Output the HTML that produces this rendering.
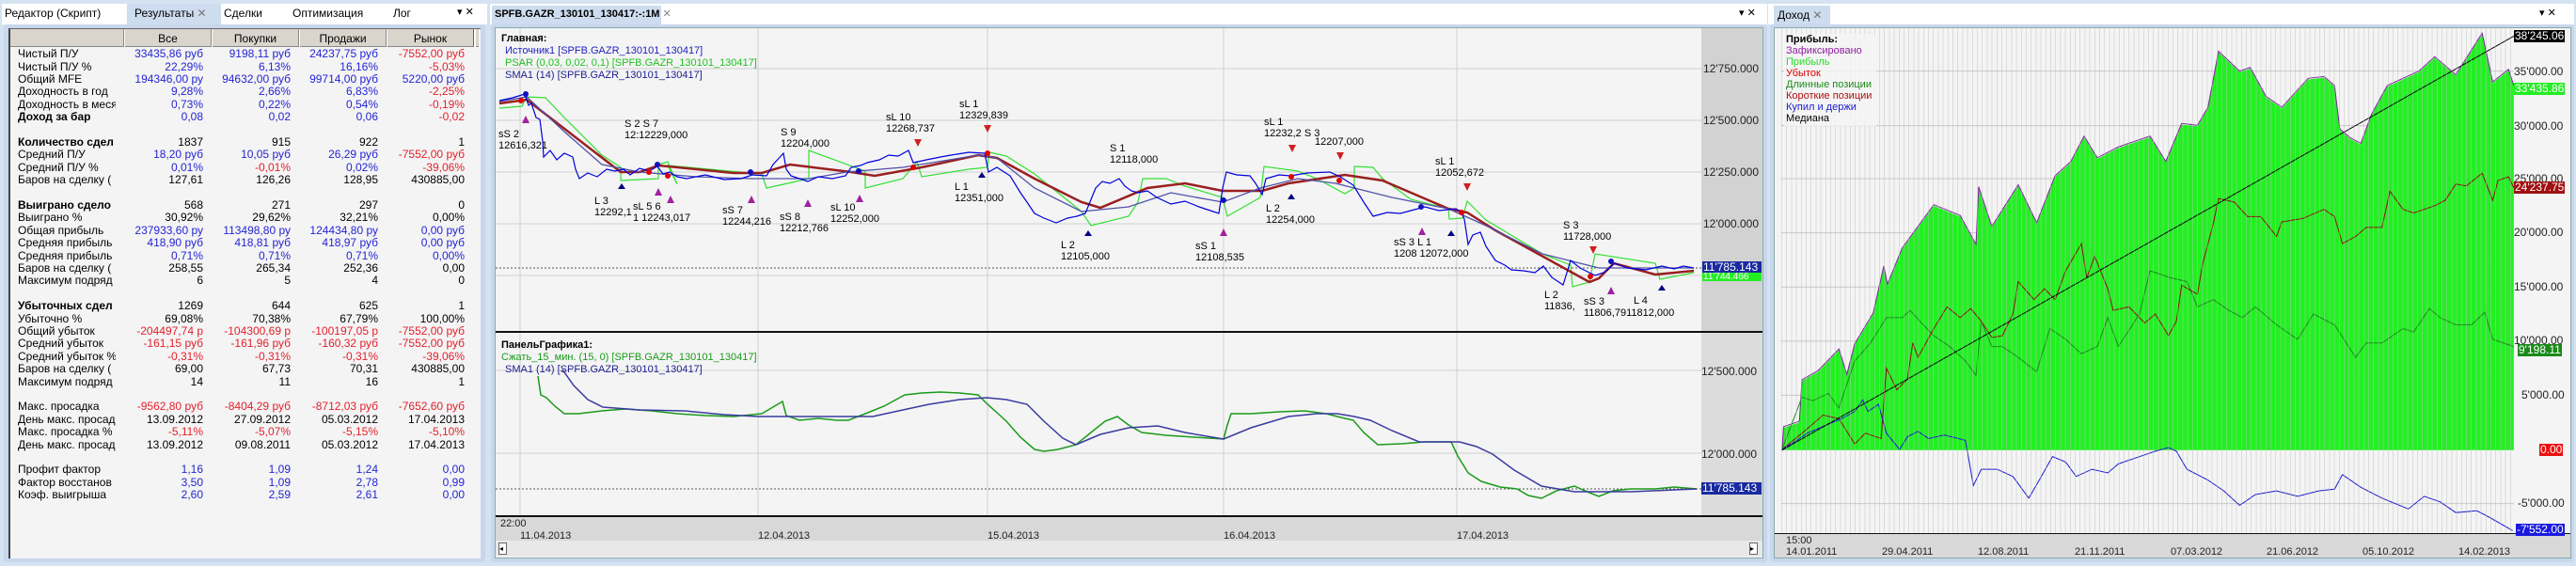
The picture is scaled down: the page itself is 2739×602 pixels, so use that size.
<!DOCTYPE html>
<html><head><meta charset="utf-8"><style>
*{margin:0;padding:0;box-sizing:border-box}
body{width:2739px;height:602px;background:#d5e2f2;position:relative;overflow:hidden;font-family:"Liberation Sans","DejaVu Sans",sans-serif;font-size:12px;color:#000}
.a{position:absolute;white-space:nowrap}
.tabbar{position:absolute;top:4px;height:22px;background:#fff}
.row{position:absolute;left:0;height:13.4px;line-height:13.4px;width:510px}
.row span{position:absolute;top:0;overflow:hidden;white-space:nowrap}
.l{left:19px;width:104px}
.c1{left:124px;width:92px;text-align:right}
.c2{left:216px;width:93px;text-align:right}
.c3{left:309px;width:93px;text-align:right}
.c4{left:402px;width:92px;text-align:right}
.b{color:#2424d4}.r{color:#e4202c}.bo{font-weight:bold}
.n{font-family:"Liberation Sans Narrow","Liberation Sans",sans-serif;font-size:11px}
.ax{font-family:"Liberation Sans Narrow","Liberation Sans",sans-serif;font-size:12px;color:#222}
.tag{position:absolute;font-family:"Liberation Sans Narrow","Liberation Sans",sans-serif;font-size:12px;height:13px;line-height:13px;padding:0 1px;color:#fff}
</style></head><body>

<!-- LEFT PANEL -->
<div class="tabbar" style="left:2px;width:516px"></div>
<div class="a" style="left:135px;top:4px;width:100px;height:22px;background:#cddcee"></div>
<div class="a" style="left:5px;top:7px">Редактор (Скрипт)</div>
<div class="a" style="left:143px;top:7px">Результаты <span style="color:#777">✕</span></div>
<div class="a" style="left:238px;top:7px">Сделки</div>
<div class="a" style="left:311px;top:7px">Оптимизация</div>
<div class="a" style="left:418px;top:7px">Лог</div>
<div class="a" style="left:486px;top:6px;font-size:11px">▾ ✕</div>
<div class="a" style="left:4px;top:26px;width:512px;height:572px;background:#c7d7ec;border-radius:3px"></div>
<div class="a" style="left:9px;top:30px;width:502px;height:564px;background:#f4f4f4;border-left:2px solid #444;border-top:1px solid #666"></div>
<div class="a" style="left:11px;top:31px;width:498px;height:19px;background:#d9d4cc;border-bottom:1px solid #888"></div>
<div class="a" style="left:131px;top:31px;width:2px;height:19px;background:#fff;border-left:1px solid #888"></div>
<div class="a" style="left:224px;top:31px;width:2px;height:19px;background:#fff;border-left:1px solid #888"></div>
<div class="a" style="left:317px;top:31px;width:2px;height:19px;background:#fff;border-left:1px solid #888"></div>
<div class="a" style="left:410px;top:31px;width:2px;height:19px;background:#fff;border-left:1px solid #888"></div>
<div class="a" style="left:503px;top:31px;width:3px;height:19px;background:#fff;border-left:1px solid #666"></div>
<div class="a" style="left:133px;top:34px;width:91px;text-align:center">Все</div>
<div class="a" style="left:226px;top:34px;width:91px;text-align:center">Покупки</div>
<div class="a" style="left:319px;top:34px;width:91px;text-align:center">Продажи</div>
<div class="a" style="left:412px;top:34px;width:91px;text-align:center">Рынок</div>

<div style="position:absolute;left:0;top:51.3px">
<div class="row" style="top:0"><span class="l">Чистый П/У</span><span class="c1 b">33435,86 руб</span><span class="c2 b">9198,11 руб</span><span class="c3 b">24237,75 руб</span><span class="c4 r">-7552,00 руб</span></div>
<div class="row" style="top:13.4px"><span class="l">Чистый П/У %</span><span class="c1 b">22,29%</span><span class="c2 b">6,13%</span><span class="c3 b">16,16%</span><span class="c4 r">-5,03%</span></div>
<div class="row" style="top:26.8px"><span class="l">Общий MFE</span><span class="c1 b">194346,00 ру</span><span class="c2 b">94632,00 руб</span><span class="c3 b">99714,00 руб</span><span class="c4 b">5220,00 руб</span></div>
<div class="row" style="top:40.2px"><span class="l">Доходность в год</span><span class="c1 b">9,28%</span><span class="c2 b">2,66%</span><span class="c3 b">6,83%</span><span class="c4 r">-2,25%</span></div>
<div class="row" style="top:53.6px"><span class="l">Доходность в меся</span><span class="c1 b">0,73%</span><span class="c2 b">0,22%</span><span class="c3 b">0,54%</span><span class="c4 r">-0,19%</span></div>
<div class="row" style="top:67px"><span class="l bo">Доход за бар</span><span class="c1 b">0,08</span><span class="c2 b">0,02</span><span class="c3 b">0,06</span><span class="c4 r">-0,02</span></div>
<div class="row" style="top:93.8px"><span class="l bo">Количество сдел</span><span class="c1">1837</span><span class="c2">915</span><span class="c3">922</span><span class="c4">1</span></div>
<div class="row" style="top:107.2px"><span class="l">Средний П/У</span><span class="c1 b">18,20 руб</span><span class="c2 b">10,05 руб</span><span class="c3 b">26,29 руб</span><span class="c4 r">-7552,00 руб</span></div>
<div class="row" style="top:120.6px"><span class="l">Средний П/У %</span><span class="c1 b">0,01%</span><span class="c2 r">-0,01%</span><span class="c3 b">0,02%</span><span class="c4 r">-39,06%</span></div>
<div class="row" style="top:134px"><span class="l">Баров на сделку (</span><span class="c1">127,61</span><span class="c2">126,26</span><span class="c3">128,95</span><span class="c4">430885,00</span></div>
<div class="row" style="top:160.8px"><span class="l bo">Выиграно сдело</span><span class="c1">568</span><span class="c2">271</span><span class="c3">297</span><span class="c4">0</span></div>
<div class="row" style="top:174.2px"><span class="l">Выиграно %</span><span class="c1">30,92%</span><span class="c2">29,62%</span><span class="c3">32,21%</span><span class="c4">0,00%</span></div>
<div class="row" style="top:187.6px"><span class="l">Общая прибыль</span><span class="c1 b">237933,60 ру</span><span class="c2 b">113498,80 ру</span><span class="c3 b">124434,80 ру</span><span class="c4 b">0,00 руб</span></div>
<div class="row" style="top:201px"><span class="l">Средняя прибыль</span><span class="c1 b">418,90 руб</span><span class="c2 b">418,81 руб</span><span class="c3 b">418,97 руб</span><span class="c4 b">0,00 руб</span></div>
<div class="row" style="top:214.4px"><span class="l">Средняя прибыль</span><span class="c1 b">0,71%</span><span class="c2 b">0,71%</span><span class="c3 b">0,71%</span><span class="c4 b">0,00%</span></div>
<div class="row" style="top:227.8px"><span class="l">Баров на сделку (</span><span class="c1">258,55</span><span class="c2">265,34</span><span class="c3">252,36</span><span class="c4">0,00</span></div>
<div class="row" style="top:241.2px"><span class="l">Максимум подряд</span><span class="c1">6</span><span class="c2">5</span><span class="c3">4</span><span class="c4">0</span></div>
<div class="row" style="top:268px"><span class="l bo">Убыточных сдел</span><span class="c1">1269</span><span class="c2">644</span><span class="c3">625</span><span class="c4">1</span></div>
<div class="row" style="top:281.4px"><span class="l">Убыточно %</span><span class="c1">69,08%</span><span class="c2">70,38%</span><span class="c3">67,79%</span><span class="c4">100,00%</span></div>
<div class="row" style="top:294.8px"><span class="l">Общий убыток</span><span class="c1 r">-204497,74 р</span><span class="c2 r">-104300,69 р</span><span class="c3 r">-100197,05 р</span><span class="c4 r">-7552,00 руб</span></div>
<div class="row" style="top:308.2px"><span class="l">Средний убыток</span><span class="c1 r">-161,15 руб</span><span class="c2 r">-161,96 руб</span><span class="c3 r">-160,32 руб</span><span class="c4 r">-7552,00 руб</span></div>
<div class="row" style="top:321.6px"><span class="l">Средний убыток %</span><span class="c1 r">-0,31%</span><span class="c2 r">-0,31%</span><span class="c3 r">-0,31%</span><span class="c4 r">-39,06%</span></div>
<div class="row" style="top:335px"><span class="l">Баров на сделку (</span><span class="c1">69,00</span><span class="c2">67,73</span><span class="c3">70,31</span><span class="c4">430885,00</span></div>
<div class="row" style="top:348.4px"><span class="l">Максимум подряд</span><span class="c1">14</span><span class="c2">11</span><span class="c3">16</span><span class="c4">1</span></div>
<div class="row" style="top:375.2px"><span class="l">Макс. просадка</span><span class="c1 r">-9562,80 руб</span><span class="c2 r">-8404,29 руб</span><span class="c3 r">-8712,03 руб</span><span class="c4 r">-7652,60 руб</span></div>
<div class="row" style="top:388.6px"><span class="l">День макс. просад</span><span class="c1">13.09.2012</span><span class="c2">27.09.2012</span><span class="c3">05.03.2012</span><span class="c4">17.04.2013</span></div>
<div class="row" style="top:402px"><span class="l">Макс. просадка %</span><span class="c1 r">-5,11%</span><span class="c2 r">-5,07%</span><span class="c3 r">-5,15%</span><span class="c4 r">-5,10%</span></div>
<div class="row" style="top:415.4px"><span class="l">День макс. просад</span><span class="c1">13.09.2012</span><span class="c2">09.08.2011</span><span class="c3">05.03.2012</span><span class="c4">17.04.2013</span></div>
<div class="row" style="top:442.2px"><span class="l">Профит фактор</span><span class="c1 b">1,16</span><span class="c2 b">1,09</span><span class="c3 b">1,24</span><span class="c4 b">0,00</span></div>
<div class="row" style="top:455.6px"><span class="l">Фактор восстанов</span><span class="c1 b">3,50</span><span class="c2 b">1,09</span><span class="c3 b">2,78</span><span class="c4 b">0,99</span></div>
<div class="row" style="top:469px"><span class="l">Коэф. выигрыша</span><span class="c1 b">2,60</span><span class="c2 b">2,59</span><span class="c3 b">2,61</span><span class="c4 b">0,00</span></div>
</div>

<!-- MIDDLE PANEL -->
<div class="tabbar" style="left:521px;width:1358px"></div>
<div class="a" style="left:523px;top:6px;width:180px;height:20px;background:#cddcee"></div>
<div class="a" style="left:526px;top:8px;font-weight:bold;font-size:11px">SPFB.GAZR_130101_130417:-:1M <span style="color:#888;font-weight:normal">✕</span></div>
<div class="a" style="left:1849px;top:7px;font-size:11px">▾ ✕</div>
<div class="a" style="left:522px;top:26px;width:1357px;height:572px;background:#c7d7ec;border-radius:3px"></div>
<div class="a" style="left:526px;top:29px;width:1349px;height:565px;background:#f4f4f4;border:1px solid #8aa"></div>
<div class="a" style="left:1809px;top:30px;width:65px;height:323px;background:#d2d2d2"></div>
<div class="a" style="left:1809px;top:354px;width:65px;height:194px;background:#dcdcdc"></div>
<div class="a" style="left:527px;top:548px;width:1347px;height:27px;background:#d8d8d8;border-top:2px solid #111"></div>
<div class="a" style="left:527px;top:575px;width:1347px;height:17px;background:#e8e8e8"></div>
<div class="a" style="left:530px;top:577px;width:9px;height:13px;background:#fff;border:1px solid #666;font-size:8px;line-height:11px">◂</div>
<div class="a" style="left:1860px;top:577px;width:9px;height:13px;background:#fff;border:1px solid #666;font-size:8px;line-height:11px">▸</div>

<svg class="a" style="left:0;top:0" width="2739" height="602">
 <g stroke="#d0d0d0" stroke-width="1">
  <line x1="527" y1="73" x2="1809" y2="73"/><line x1="527" y1="128" x2="1809" y2="128"/>
  <line x1="527" y1="183" x2="1809" y2="183"/><line x1="527" y1="238" x2="1809" y2="238"/>
  <line x1="527" y1="293" x2="1809" y2="293"/><line x1="527" y1="394" x2="1809" y2="394"/>
  <line x1="527" y1="482" x2="1809" y2="482"/>
  <line x1="553" y1="30" x2="553" y2="548"/><line x1="806" y1="30" x2="806" y2="548"/>
  <line x1="1050" y1="30" x2="1050" y2="548"/><line x1="1301" y1="30" x2="1301" y2="548"/>
  <line x1="1549" y1="30" x2="1549" y2="548"/>
 </g>
 <line x1="527" y1="285" x2="1809" y2="285" stroke="#555" stroke-dasharray="2,2"/>
 <line x1="527" y1="520" x2="1809" y2="520" stroke="#555" stroke-dasharray="2,2"/>
 <line x1="527" y1="353" x2="1874" y2="353" stroke="#111" stroke-width="2"/>
 <polyline fill="none" stroke="#33e033" stroke-width="1.2" points="531,115 555,113 560,103 580,104 600,125 640,165 660,178 660,192 700,190 700,175 710,172 720,196 710,176 810,185 815,200 860,190 860,160 920,182 920,200 960,190 975,172 980,188 1030,180 1050,178 1052,162 1070,166 1100,185 1150,225 1160,240 1200,230 1210,215 1215,190 1240,190 1260,198 1300,210 1305,230 1340,210 1344,177 1380,182 1400,190 1430,206 1440,200 1440,177 1460,178 1470,190 1500,212 1540,222 1541,233 1555,232 1560,214 1580,234 1640,270 1670,282 1672,305 1690,300 1696,270 1760,280 1765,297 1801,290"/>
 <polyline fill="none" stroke="#9a2020" stroke-width="2.5" points="531,110 560,106 660,183 680,183 700,176 780,184 810,184 840,175 905,183 930,187 980,178 1040,165 1060,168 1100,190 1150,215 1170,221 1220,200 1260,195 1300,203 1342,203 1370,195 1430,186 1470,192 1540,222 1560,226 1590,245 1690,300 1700,296 1716,280 1760,292 1801,288"/>
 <polyline fill="none" stroke="#5050a8" stroke-width="1.3" points="531,108 560,103 600,140 640,175 680,183 740,188 800,190 860,190 900,183 960,178 1040,165 1060,168 1100,200 1150,225 1200,220 1245,205 1300,215 1340,200 1380,190 1420,195 1480,210 1540,222 1580,240 1640,270 1700,285 1801,285"/>
 <polyline fill="none" stroke="#0000dd" stroke-width="1.2" points="531,107 545,104 558,100 562,112 565,110 570,125 574,127 577,150 578,167 585,160 592,170 600,163 609,167 612,180 616,190 625,184 635,188 645,180 654,182 663,180 670,186 680,179 690,182 699,177 705,185 712,183 720,188 730,190 750,186 770,191 788,190 800,186 815,187 822,175 833,163 836,180 841,187 850,190 859,193 870,188 885,190 899,187 905,178 915,176 922,173 935,170 945,165 955,166 966,160 971,173 985,170 1000,167 1011,165 1030,162 1047,163 1051,183 1060,178 1074,187 1085,205 1092,215 1100,227 1110,232 1123,237 1135,232 1145,230 1154,227 1165,200 1172,193 1180,195 1190,190 1196,198 1203,203 1210,205 1220,203 1230,210 1245,217 1260,214 1275,220 1290,225 1296,227 1300,200 1304,183 1315,186 1329,187 1335,195 1342,207 1346,190 1360,186 1372,187 1390,184 1414,183 1425,188 1439,197 1450,215 1460,230 1475,226 1489,227 1500,224 1515,220 1530,224 1548,222 1554,226 1557,233 1561,260 1566,250 1574,247 1580,262 1590,277 1600,282 1607,287 1620,288 1632,290 1641,283 1650,295 1662,303 1666,290 1670,277 1680,285 1696,293 1705,290 1717,280 1730,285 1750,287 1767,283 1780,286 1790,283 1801,285"/>
 <g fill="#e00000"><circle cx="554" cy="107" r="3"/><circle cx="690" cy="183" r="3"/><circle cx="710" cy="187" r="3"/><circle cx="971" cy="178" r="3"/><circle cx="1050" cy="163" r="3"/><circle cx="1373" cy="188" r="3"/><circle cx="1424" cy="192" r="3"/><circle cx="1554" cy="226" r="3"/><circle cx="1691" cy="294" r="3"/></g>
 <g fill="#1010c0"><circle cx="559" cy="100" r="3"/><circle cx="699" cy="175" r="3"/><circle cx="798" cy="183" r="3"/><circle cx="913" cy="182" r="3"/><circle cx="1301" cy="213" r="3"/><circle cx="1511" cy="220" r="3"/><circle cx="1713" cy="278" r="3"/></g>
 <g fill="#a020a0"><polygon points="559,123 555,131 563,131"/><polygon points="700,200 696,208 704,208"/><polygon points="713,208 709,216 717,216"/><polygon points="799,208 795,216 803,216"/><polygon points="859,212 855,220 863,220"/><polygon points="914,207 910,215 918,215"/><polygon points="1301,243 1297,251 1305,251"/><polygon points="1512,242 1508,250 1516,250"/><polygon points="1713,305 1709,313 1717,313"/></g>
 <g fill="#d02020"><polygon points="972,148 976,156 980,148"/><polygon points="1046,133 1050,141 1054,133"/><polygon points="1370,154 1374,162 1378,154"/><polygon points="1421,162 1425,170 1429,162"/><polygon points="1556,195 1560,203 1564,195"/><polygon points="1690,262 1694,270 1698,262"/></g>
 <g fill="#000080"><polygon points="661,195 657,201 665,201"/><polygon points="1044,183 1040,189 1048,189"/><polygon points="1157,245 1153,251 1161,251"/><polygon points="1373,206 1369,212 1377,212"/><polygon points="1543,245 1539,251 1547,251"/><polygon points="1767,303 1763,309 1771,309"/></g>
 <polyline fill="none" stroke="#1a9a1a" stroke-width="1.5" points="572,400 575,420 581,423 590,432 600,440 615,440 640,437 665,435 693,437 720,440 750,442 780,443 810,440 832,427 836,442 850,447 870,445 890,447 902,447 920,440 940,432 962,420 980,418 1000,417 1020,418 1040,420 1050,430 1058,437 1070,448 1085,465 1100,478 1110,480 1125,478 1144,473 1160,460 1175,448 1188,443 1200,452 1214,460 1240,463 1270,465 1301,467 1305,452 1309,440 1330,440 1360,438 1387,437 1410,440 1430,445 1439,447 1450,460 1465,473 1490,472 1515,470 1543,470 1550,485 1561,503 1575,512 1595,518 1613,520 1625,527 1639,530 1655,522 1674,517 1690,524 1700,528 1715,522 1734,520 1760,520 1780,518 1804,520"/>
 <polyline fill="none" stroke="#3a3aa0" stroke-width="1.5" points="598,393 610,410 625,425 641,433 680,436 728,437 770,441 806,443 850,443 884,443 928,443 960,436 988,430 1020,425 1049,423 1070,425 1092,430 1110,448 1130,466 1144,473 1170,462 1200,455 1231,453 1260,460 1301,467 1330,455 1370,443 1400,440 1422,440 1440,443 1457,447 1480,458 1509,470 1552,470 1570,475 1587,483 1610,500 1639,517 1674,523 1734,523 1804,520"/>
</svg>
<div class="a" style="left:533px;top:35px;font-weight:bold;font-size:11px">Главная:</div>
<div class="a n" style="left:537px;top:48px;color:#2020c0">Источник1 [SPFB.GAZR_130101_130417]</div>
<div class="a n" style="left:537px;top:61px;color:#20c020">PSAR (0,03, 0,02, 0,1) [SPFB.GAZR_130101_130417]</div>
<div class="a n" style="left:537px;top:74px;color:#202090">SMA1 (14) [SPFB.GAZR_130101_130417]</div>
<div class="a n" style="left:530px;top:137px">sS 2<br>12616,321</div>
<div class="a n" style="left:664px;top:126px">S 2 S 7<br>12:12229,000</div>
<div class="a n" style="left:632px;top:208px">L 3<br>12292,1</div>
<div class="a n" style="left:673px;top:214px">sL 5 6<br>1 12243,017</div>
<div class="a n" style="left:768px;top:218px">sS 7<br>12244,216</div>
<div class="a n" style="left:829px;top:225px">sS 8<br>12212,766</div>
<div class="a n" style="left:883px;top:215px">sL 10<br>12252,000</div>
<div class="a n" style="left:830px;top:135px">S 9<br>12204,000</div>
<div class="a n" style="left:942px;top:119px">sL 10<br>12268,737</div>
<div class="a n" style="left:1020px;top:105px">sL 1<br>12329,839</div>
<div class="a n" style="left:1015px;top:193px">L 1<br>12351,000</div>
<div class="a n" style="left:1128px;top:255px">L 2<br>12105,000</div>
<div class="a n" style="left:1180px;top:152px">S 1<br>12118,000</div>
<div class="a n" style="left:1271px;top:256px">sS 1<br>12108,535</div>
<div class="a n" style="left:1344px;top:124px">sL 1<br>12232,2 S 3</div>
<div class="a n" style="left:1398px;top:145px">12207,000</div>
<div class="a n" style="left:1346px;top:216px">L 2<br>12254,000</div>
<div class="a n" style="left:1526px;top:166px">sL 1<br>12052,672</div>
<div class="a n" style="left:1482px;top:252px">sS 3 L 1<br>1208 12072,000</div>
<div class="a n" style="left:1662px;top:234px">S 3<br>11728,000</div>
<div class="a n" style="left:1642px;top:308px">L 2<br>11836,</div>
<div class="a n" style="left:1684px;top:315px">sS 3<br>11806,7911812,000</div>
<div class="a n" style="left:1737px;top:314px">L 4</div>
<div class="a ax" style="left:1811px;top:66px">12'750.000</div>
<div class="a ax" style="left:1811px;top:121px">12'500.000</div>
<div class="a ax" style="left:1811px;top:176px">12'250.000</div>
<div class="a ax" style="left:1811px;top:231px">12'000.000</div>
<div class="tag" style="left:1810px;top:278px;background:#1a2aa0;width:63px">11'785.143</div>
<div class="tag" style="left:1810px;top:290px;background:#22ee22;width:63px;height:9px;line-height:9px;font-size:10px">11'744.466</div>
<div class="a" style="left:533px;top:361px;font-weight:bold;font-size:11px">ПанельГрафика1:</div>
<div class="a n" style="left:533px;top:374px;color:#1a9a1a">Сжать_15_мин. (15, 0) [SPFB.GAZR_130101_130417]</div>
<div class="a n" style="left:537px;top:387px;color:#202090">SMA1 (14) [SPFB.GAZR_130101_130417]</div>
<div class="a ax" style="left:1809px;top:388px">12'500.000</div>
<div class="a ax" style="left:1809px;top:476px">12'000.000</div>
<div class="tag" style="left:1809px;top:513px;background:#1a2aa0;width:64px">11'785.143</div>
<div class="a ax" style="left:532px;top:551px;font-size:11px">22:00</div>
<div class="a ax" style="left:553px;top:564px;font-size:11px">11.04.2013</div>
<div class="a ax" style="left:806px;top:564px;font-size:11px">12.04.2013</div>
<div class="a ax" style="left:1050px;top:564px;font-size:11px">15.04.2013</div>
<div class="a ax" style="left:1301px;top:564px;font-size:11px">16.04.2013</div>
<div class="a ax" style="left:1549px;top:564px;font-size:11px">17.04.2013</div>

<!-- RIGHT PANEL -->
<div class="tabbar" style="left:1880px;width:857px"></div>
<div class="a" style="left:1886px;top:6px;width:60px;height:20px;background:#cddcee"></div>
<div class="a n" style="left:1890px;top:9px;font-size:12px">Доход <span style="color:#777">✕</span></div>
<div class="a" style="left:2700px;top:7px;font-size:11px">▾ ✕</div>
<div class="a" style="left:1882px;top:26px;width:855px;height:572px;background:#c7d7ec;border-radius:3px"></div>
<div class="a" style="left:1886px;top:29px;width:848px;height:565px;background:#f4f4f4;border:1px solid #8aa"></div>
<div class="a" style="left:1887px;top:567px;width:846px;height:26px;background:#d8d8d8;border-top:1px solid #111"></div>
<svg class="a" style="left:1860px;top:0" width="879" height="602" viewBox="0 0 1568 1568" preserveAspectRatio="none">
 <g stroke="#c8c8c8">
  <line x1="60" y1="197" x2="1450" y2="197" vector-effect="non-scaling-stroke"/><line x1="60" y1="348" x2="1450" y2="348" vector-effect="non-scaling-stroke"/>
  <line x1="60" y1="495" x2="1450" y2="495" vector-effect="non-scaling-stroke"/><line x1="60" y1="645" x2="1450" y2="645" vector-effect="non-scaling-stroke"/>
  <line x1="60" y1="795" x2="1450" y2="795" vector-effect="non-scaling-stroke"/><line x1="60" y1="945" x2="1450" y2="945" vector-effect="non-scaling-stroke"/>
  <line x1="60" y1="1095" x2="1450" y2="1095" vector-effect="non-scaling-stroke"/><line x1="60" y1="1395" x2="1450" y2="1395" vector-effect="non-scaling-stroke"/>
 </g>
 <polygon fill="#22f022" points="62,1247 65,1185 95,1170 100,1055 130,1030 170,970 185,1040 200,955 235,870 255,740 262,790 290,690 320,630 350,570 400,600 430,680 435,520 460,630 510,515 545,620 580,490 610,450 635,380 660,440 700,410 760,380 790,450 820,345 850,350 870,300 890,145 930,200 950,190 980,270 1010,300 1060,220 1090,215 1110,240 1120,360 1140,385 1160,400 1180,320 1210,240 1270,200 1300,160 1340,210 1390,95 1410,230 1440,195 1450,240 1450,1247"/>
 <polyline fill="none" stroke="#8020a0" vector-effect="non-scaling-stroke" points="62,1247 65,1182 95,1167 100,1052 130,1027 170,967 185,1037 200,952 235,867 255,737 262,787 290,687 320,627 350,567 400,597 430,677 435,517 460,627 510,512 545,617 580,487 610,447 635,377 660,437 700,407 760,377 790,447 820,342 850,347 870,297 890,142 930,197 950,187 980,267 1010,297 1060,217 1090,212 1110,237 1120,357 1140,382 1160,397 1180,317 1210,237 1270,197 1300,157 1340,207 1390,92 1410,227 1440,192 1450,237"/>
 <polyline fill="none" stroke="#1a8a1a" vector-effect="non-scaling-stroke" points="62,1245 100,1100 120,1110 150,1090 170,1130 200,1000 230,950 260,880 290,880 305,860 330,900 350,930 380,960 410,1000 430,1040 440,890 460,960 480,960 510,990 545,1030 570,910 600,940 630,980 660,960 680,880 700,960 740,870 760,750 800,770 830,780 850,850 880,830 910,860 935,880 960,850 1000,900 1040,940 1070,870 1110,900 1150,990 1170,950 1200,950 1240,910 1260,920 1290,855 1310,880 1340,900 1370,900 1395,865 1410,940 1450,960"/>
 <polyline fill="none" stroke="#8b1010" vector-effect="non-scaling-stroke" points="62,1245 100,1200 140,1150 170,1160 200,1230 220,1200 250,1215 260,1020 280,1080 300,1050 310,950 320,990 350,910 375,850 400,880 420,855 440,890 460,935 480,930 500,870 510,780 540,830 560,800 580,830 600,750 630,675 640,770 655,710 680,800 690,860 720,850 750,895 770,870 795,930 810,890 820,790 850,815 860,730 880,620 890,550 920,560 945,600 970,600 1000,655 1010,615 1050,605 1090,580 1110,600 1125,675 1150,655 1170,630 1200,630 1215,530 1240,580 1260,590 1300,570 1320,555 1340,510 1360,515 1390,480 1410,555 1420,500 1440,490 1450,520"/>
 <polyline fill="none" stroke="#1a1ad0" vector-effect="non-scaling-stroke" points="62,1245 85,1225 110,1200 150,1175 175,1160 200,1140 215,1108 225,1140 245,1120 260,1200 285,1245 300,1210 320,1195 340,1215 370,1205 410,1220 425,1345 440,1300 470,1300 500,1320 530,1380 550,1330 575,1265 600,1280 620,1320 650,1300 680,1310 700,1285 740,1265 770,1250 795,1240 810,1250 830,1300 870,1330 900,1360 930,1400 960,1370 1000,1360 1040,1375 1080,1360 1110,1355 1125,1315 1160,1350 1200,1380 1250,1410 1280,1375 1310,1390 1340,1420 1380,1415 1400,1430 1448,1470"/>
 <line x1="62" y1="1247" x2="1450" y2="100" stroke="#000" vector-effect="non-scaling-stroke"/>
</svg>
<div class="a" style="left:1894px;top:30px;width:779px;height:537px;background:repeating-linear-gradient(90deg,rgba(190,190,190,0.45) 0 1px,transparent 1px 5.2px)"></div>
<div class="a" style="left:1897px;top:36px;width:98px;height:98px;background:rgba(244,244,244,0.85)"></div>
<div class="a n" style="left:1899px;top:36px;line-height:12px;font-size:11px">
<b style="color:#000">Прибыль:</b><br><span style="color:#9020a0">Зафиксировано</span><br><span style="color:#22dd22">Прибыль</span><br><span style="color:#e00000">Убыток</span><br><span style="color:#1a8a1a">Длинные позиции</span><br><span style="color:#b01010">Короткие позиции</span><br><span style="color:#1a1ad0">Купил и держи</span><br><span style="color:#000">Медиана</span></div>
<div class="tag" style="left:2673px;top:32px;background:#000">38'245.06</div>
<div class="a ax" style="left:2673px;top:69px">35'000.00</div>
<div class="tag" style="left:2673px;top:88px;background:#22ee22">33'435.86</div>
<div class="a ax" style="left:2673px;top:127px">30'000.00</div>
<div class="a ax" style="left:2673px;top:183px">25'000.00</div>
<div class="tag" style="left:2673px;top:193px;background:#a01010">24'237.75</div>
<div class="a ax" style="left:2673px;top:240px">20'000.00</div>
<div class="a ax" style="left:2673px;top:298px">15'000.00</div>
<div class="a ax" style="left:2673px;top:355px">10'000.00</div>
<div class="tag" style="left:2677px;top:366px;background:#1a8a1a">9'198.11</div>
<div class="a ax" style="left:2681px;top:413px">5'000.00</div>
<div class="tag" style="left:2700px;top:472px;background:#ee1010">0.00</div>
<div class="a ax" style="left:2677px;top:528px">-5'000.00</div>
<div class="tag" style="left:2675px;top:557px;background:#1a1ae0">-7'552.00</div>
<div class="a ax" style="left:1899px;top:569px;font-size:11px">15:00</div>
<div class="a ax" style="left:1899px;top:581px;font-size:11px">14.01.2011</div>
<div class="a ax" style="left:2001px;top:581px;font-size:11px">29.04.2011</div>
<div class="a ax" style="left:2103px;top:581px;font-size:11px">12.08.2011</div>
<div class="a ax" style="left:2206px;top:581px;font-size:11px">21.11.2011</div>
<div class="a ax" style="left:2308px;top:581px;font-size:11px">07.03.2012</div>
<div class="a ax" style="left:2410px;top:581px;font-size:11px">21.06.2012</div>
<div class="a ax" style="left:2512px;top:581px;font-size:11px">05.10.2012</div>
<div class="a ax" style="left:2614px;top:581px;font-size:11px">14.02.2013</div>
</body></html>
